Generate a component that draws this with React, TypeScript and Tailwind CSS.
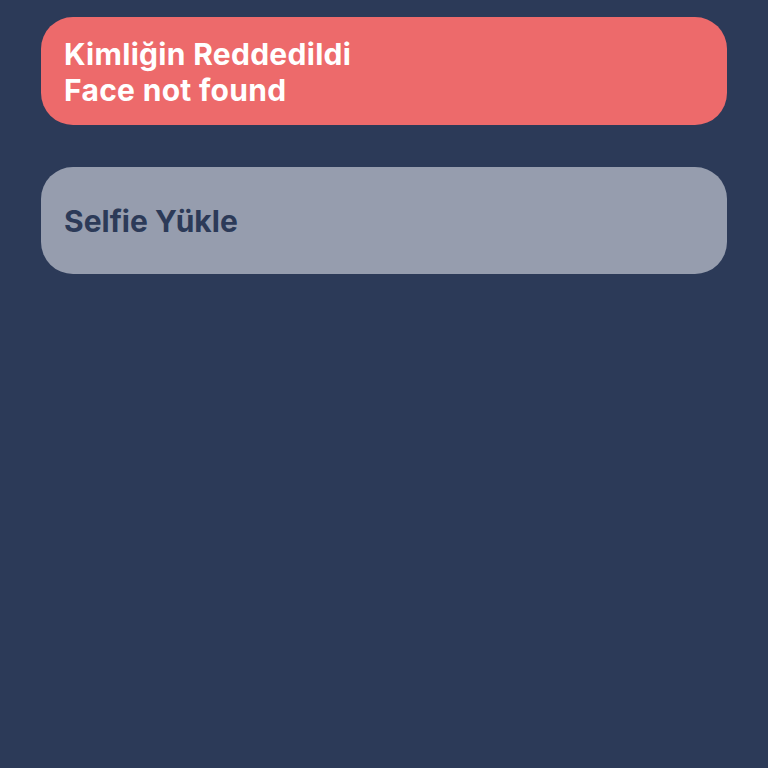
export default function App() {
  return (
    <div className="min-h-[768px] w-full bg-[#2c3a58] px-[41px] pt-[17px]" style={{ fontFamily: "Inter, 'Noto Sans', sans-serif" }}>
      <div className="flex flex-col gap-[42px]">
        <div className="flex h-[108px] flex-col justify-center rounded-[32px] bg-[#ed6a6b] px-[23px] pt-[1px] text-[30px] font-bold leading-[36px] tracking-[0.3px] text-white">
          <div>Kimliğin Reddedildi</div>
          <div>Face not found</div>
        </div>
        <div className="flex h-[107px] items-center rounded-[32px] bg-[#969dae] px-[23px] pt-[1px] text-[30px] font-bold leading-[36px] text-[#2c3a58]">
          Selfie Yükle
        </div>
      </div>
    </div>
  );
}
